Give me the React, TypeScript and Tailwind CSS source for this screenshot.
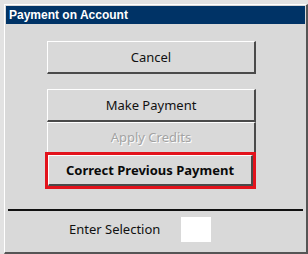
const btnFont = { fontFamily: '"Noto Sans", "Open Sans", sans-serif' };

function RaisedButton({
  label,
  className = "",
  textClass = "",
}: {
  label: string;
  className?: string;
  textClass?: string;
}) {
  return (
    <div
      className={`flex items-center justify-center border-t border-l border-t-white border-l-white border-r-2 border-r-[#4a4a4a] bg-[#d9d9d9] ${className}`}
    >
      <span className={`text-[13px] leading-none ${textClass}`} style={btnFont}>
        {label}
      </span>
    </div>
  );
}

export default function App() {
  return (
    <div className="w-[308px] h-[254px] bg-[#e2e2e2] pt-[4px] pl-[4px]">
      <div className="flex flex-col w-[304px] h-[250px] border-t border-l border-t-white border-l-white border-r-2 border-b-2 border-r-[#555] border-b-[#555] bg-[#d9d9d9] pt-px px-px">
        <div className="h-[18px] bg-[#003366] flex items-center pl-[3px]">
          <span
            className="text-white text-[12px] font-bold leading-none"
            style={{ fontFamily: '"Liberation Sans", Arial, sans-serif' }}
          >
            Payment on Account
          </span>
        </div>

        <div className="flex flex-col ml-[41px] w-[209px] mt-[17px]">
          <RaisedButton
            label="Cancel"
            className="h-[33px] border-b-2 border-b-[#4a4a4a] text-[#111]"
          />
          <RaisedButton
            label="Make Payment"
            className="h-[33px] mt-[15px] border-b-2 border-b-[#4a4a4a] text-[#111]"
          />
          <RaisedButton
            label="Apply Credits"
            className="h-[30px]"
            textClass="text-[#a3a3a3] [text-shadow:1px_1px_0_#ffffff]"
          />
          <div className="-ml-[2px] w-[211px] h-[37px] border-[3px] border-[#e3131c]">
            <RaisedButton
              label="Correct Previous Payment"
              className="h-full border-b-2 border-b-[#4a4a4a] text-[#0a0a0a]"
              textClass="font-bold"
            />
          </div>
        </div>

        <div className="mx-[2px] mt-[20px] h-[2px] bg-[#111]" />

        <div className="flex-1 flex items-center pl-[63px] pb-[5px]">
          <span className="text-[13px] text-[#111] leading-none" style={btnFont}>
            Enter Selection
          </span>
          <div className="ml-[21px] w-[30px] h-[25px] bg-white" />
        </div>
      </div>
    </div>
  );
}
